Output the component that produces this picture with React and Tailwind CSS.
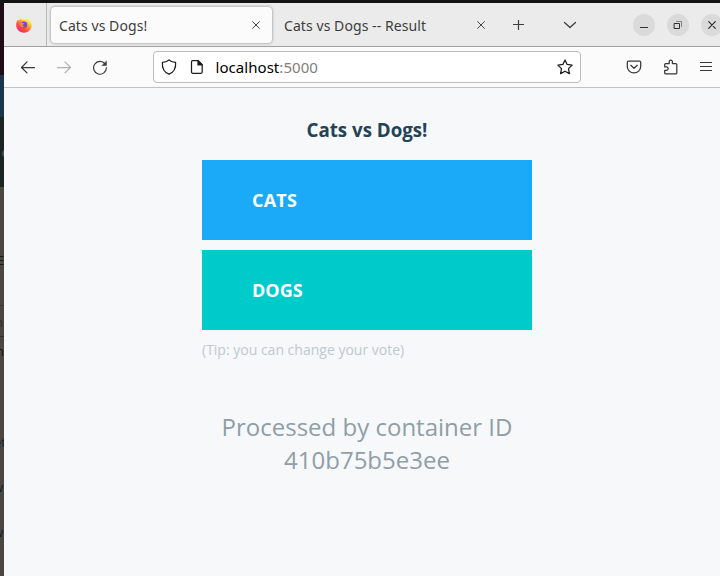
import React from "react";

const UI_FONT = "font-['Noto_Sans','Open_Sans',sans-serif]";

function Icon({ w = 16, h = 16, className = "", children }) {
  return (
    <svg
      width={w}
      height={h}
      viewBox={`0 0 ${w} ${h}`}
      fill="none"
      stroke="currentColor"
      strokeWidth="1.25"
      strokeLinecap="round"
      strokeLinejoin="round"
      className={`shrink-0 ${className}`}
    >
      {children}
    </svg>
  );
}

function FirefoxIcon() {
  return (
    <svg width="16" height="16" viewBox="0 0 16 16" className="shrink-0">
      <defs>
        <linearGradient id="fox" x1="13" y1="1" x2="3" y2="15" gradientUnits="userSpaceOnUse">
          <stop offset="0.15" stopColor="#fff04f" />
          <stop offset="0.42" stopColor="#ffa02c" />
          <stop offset="0.7" stopColor="#ff4550" />
          <stop offset="1" stopColor="#f0258c" />
        </linearGradient>
        <radialGradient id="globe" cx="8" cy="7" r="4" gradientUnits="userSpaceOnUse">
          <stop offset="0" stopColor="#5b4be0" />
          <stop offset="1" stopColor="#8e45d8" />
        </radialGradient>
      </defs>
      <path
        d="M10.500 0c-.4 1.300.1 2.300.8 3.100-1.200-.7-3.500-.9-4.900-.2C5.700 2.600 5 2 4.900 1.400 3.900 2 3.400 2.700 3.200 3.500c-.4 0-.9-.4-1-.9C1 3.900.2 5.800.2 8c0 4.300 3.400 7.700 7.800 7.700s7.800-3.300 7.800-7.700c0-2.100-.8-3.900-1.800-4.900.1.500.1 1 0 1.300C13.100 2.500 11.200 2 10.500 0z"
        fill="url(#fox)"
      />
      <circle cx="8" cy="7.800" r="3.300" fill="url(#globe)" />
      <path d="M3.300 5.800c1.200-.7 2.600-.3 3.500.2.400.2 1.200.1 1.700.3-.2.900-1.400 1.100-1.700 1.600-.3.800.7 1.600 2 1.200-1.200 1.700-3.700 1.300-4.300-.6-.3-1-.3-2-1.200-2.700z" fill="#ff8a24" />
    </svg>
  );
}

function Cross({ className = "" }) {
  return (
    <Icon w={8} h={8} className={className}>
      <path d="M.6.6l6.800 6.800M7.400.6L.6 7.400" strokeWidth="0.95" />
    </Icon>
  );
}

function WindowButton({ children }) {
  return (
    <div className="flex h-[22px] w-[22px] shrink-0 items-center justify-center rounded-full bg-[#dadada] text-[#303030]">
      {children}
    </div>
  );
}

function TabStrip() {
  return (
    <div className="flex h-11 items-center border-b border-[#a0a0a0] bg-[#ebebeb] text-[#3d3d3d]">
      <div className="flex h-full w-[43px] shrink-0 items-center border-r border-[#b9b9b9] pl-3">
        <FirefoxIcon />
      </div>
      <div className="ml-1 flex h-9 w-[221px] shrink-0 items-center justify-between rounded-[4px] bg-[#fbfbfb] pl-2 pr-3 shadow-[0_0_3px_rgba(0,0,0,0.45)]">
        <span className="whitespace-nowrap pt-[2px] text-[14px] tracking-[0.07px]">Cats vs Dogs!</span>
        <Cross />
      </div>
      <div className="flex h-9 w-[213px] shrink-0 items-center justify-between pl-3">
        <span className="whitespace-nowrap pt-[2px] text-[14px] tracking-[0.07px]">Cats vs Dogs -- Result</span>
        <Cross />
      </div>
      <Icon w={12} h={12} className="ml-[27px] mt-px">
        <path d="M6.500 1v10M1 5.500h11" strokeWidth="1.2" strokeLinecap="butt" />
      </Icon>
      <Icon w={14} h={8} className="ml-[39px]">
        <path d="M1.500 1.500L7 6.500l5.500-5" />
      </Icon>
      <div className="ml-14 flex gap-3">
        <WindowButton>
          <Icon w={10} h={10}>
            <path d="M1 7.500h8" strokeLinecap="butt" strokeWidth="1" />
          </Icon>
        </WindowButton>
        <WindowButton>
          <Icon w={10} h={10}>
            <path d="M1.500 3.500h5v5h-5z" strokeWidth="1" strokeLinejoin="miter" />
            <path d="M3.500 1.500h5v5" strokeWidth="1" strokeLinejoin="miter" opacity=".5" />
          </Icon>
        </WindowButton>
        <WindowButton>
          <Icon w={8} h={8}>
            <path d="M.7.7l6.600 6.600M7.300.7L.7 7.300" strokeWidth="1.2" />
          </Icon>
        </WindowButton>
      </div>
    </div>
  );
}

function Toolbar() {
  return (
    <div className="flex h-[41px] items-center border-b border-[#c2c2c2] bg-[#fbfbfb] text-[#383838]">
      <Icon className="ml-4">
        <path d="M14.500 8.500H1.700M7 2.900L1.500 8.500 7 13.900" />
      </Icon>
      <Icon className="ml-5 text-[#b1b1b1]">
        <path d="M1.500 8.500h12.800M9 2.900l5.500 5.600L9 13.900" />
      </Icon>
      <Icon className="ml-5">
        <path d="M13 4.800A6.400 6.400 0 1 0 14.400 8.700" strokeWidth="1.15" />
        <path d="M14.500 2.200v4.300h-4.300z" fill="currentColor" strokeWidth=".5" />
      </Icon>
      <div className="ml-[45px] flex h-8 w-[428px] shrink-0 items-center rounded-[4px] border border-[#bcbcbc] bg-white text-[#1c1c1c]">
        <Icon className="ml-[7px]">
          <path d="M8 .9C6.200 2.300 3.800 3.200 1.400 3.400 1 8.600 3 13.300 8 15.200 13 13.300 15 8.600 14.600 3.400 12.200 3.200 9.800 2.300 8 .9z" />
        </Icon>
        <Icon className="ml-3">
          <path d="M3.500 1.700h5.700l4 4v7.400q0 1.200-1.200 1.200H3.700q-1.200 0-1.200-1.200V2.900q0-1.200 1-1.200z" />
          <path d="M9 1.700v4.200h4.200z" fill="currentColor" />
        </Icon>
        <span className="ml-[10.5px] flex-1 whitespace-nowrap text-[15px] tracking-[0.05px] text-black">
          localhost<span className="text-[#808080]">:5000</span>
        </span>
        <Icon className="mr-[7px]">
          <path d="M8 .9l2.100 4.500 5 .7-3.600 3.500.9 5L8 12.200l-4.400 2.400.9-5L.9 6.100l5-.7z" />
        </Icon>
      </div>
      <Icon className="ml-[45px]">
        <path d="M2.500 2.100h11q1.200 0 1.200 1.200V7.500c0 3.700-3 6.400-6.700 6.400S1.300 11.200 1.300 7.500V3.300q0-1.200 1.200-1.200z" />
        <path d="M4.800 6.300L8 9.300l3.200-3" />
      </Icon>
      <Icon className="ml-[21px]">
        <path d="M2.600 4.600h3.600V2.700a1.600 1.600 0 0 1 3.200 0v1.900h3.400q1 0 1 1v8.300q0 1-1 1H2.700q-1 0-1-1v-2.600h1.800a1.700 1.700 0 0 0 0-3.400H1.700V5.500q0-.9.900-.9z" />
      </Icon>
      <Icon className="ml-[19px]">
        <path d="M2 3.500h12M2 7.500h12M2 11.500h12" strokeLinecap="butt" strokeWidth="1.150" />
      </Icon>
    </div>
  );
}

function VotePage() {
  return (
    <div className="flex flex-1 flex-col items-center bg-[#f7f8f9] font-['Open_Sans',sans-serif]">
      <div className="flex w-[330px] flex-col">
        <h3 className="mt-[29px] text-center text-[18.72px] font-bold leading-[26px] text-[#254356]">
          Cats vs Dogs!
        </h3>
        <button className="mt-[17px] h-20 bg-[#1aaaf8] pl-[50px] text-left text-[18px] font-bold tracking-[0.2px] text-white">
          CATS
        </button>
        <button className="mt-[10px] h-20 bg-[#00cbca] pl-[50px] text-left text-[18px] font-bold text-white">
          DOGS
        </button>
        <p className="mt-[10px] text-[14px] leading-5 text-[#c0c9ce]">(Tip: you can change your vote)</p>
        <p className="mt-[50px] text-center text-[24px] leading-[33px] text-[#8f9ea8]">
          Processed by container ID 410b75b5e3ee
        </p>
      </div>
    </div>
  );
}

const FRAGMENTS = [
  { text: "E", place: "top-[250px] left-[-3px] text-[#191919]" },
  { text: "n", place: "top-[312px] left-[-5px] text-[#302d29]" },
  { text: "n", place: "top-[341px] left-[-4px] text-[#191919]" },
  { text: "et", place: "top-[432px] left-[-6px] text-[#18212c]" },
  { text: "w", place: "top-[477px] left-[-7px] text-[#18212c]" },
  { text: "w", place: "top-[522px] left-[-7px] text-[#18212c]" },
];

function BackgroundEdge() {
  return (
    <div className="relative flex w-1 shrink-0 flex-col overflow-hidden">
      <div className="h-[72px] bg-[#200c17]" />
      <div className="h-[42px] bg-[#1b354a]" />
      <div className="h-[70px] bg-[#1c2422]" />
      <div className="flex-1 bg-[#4a4743]" />
      <div className="absolute left-[2px] top-[147px] h-[7px] w-[7px] rounded-full bg-[#3f5360]" />
      <div className="absolute left-0 top-[302px] h-px w-1 bg-[#383532]" />
      <div className="absolute left-0 top-[333px] h-px w-1 bg-[#302d2a]" />
      {FRAGMENTS.map((f, i) => (
        <span key={i} className={`absolute text-[13px] leading-[14px] ${f.place}`}>
          {f.text}
        </span>
      ))}
    </div>
  );
}

export default function App() {
  return (
    <div className={`flex h-[576px] w-[720px] flex-col overflow-hidden bg-[#141414] pt-[3px] ${UI_FONT}`}>
      <div className="flex flex-1">
        <BackgroundEdge />
        <div className="flex w-[726px] shrink-0 flex-col">
          <TabStrip />
          <Toolbar />
          <VotePage />
        </div>
      </div>
    </div>
  );
}
